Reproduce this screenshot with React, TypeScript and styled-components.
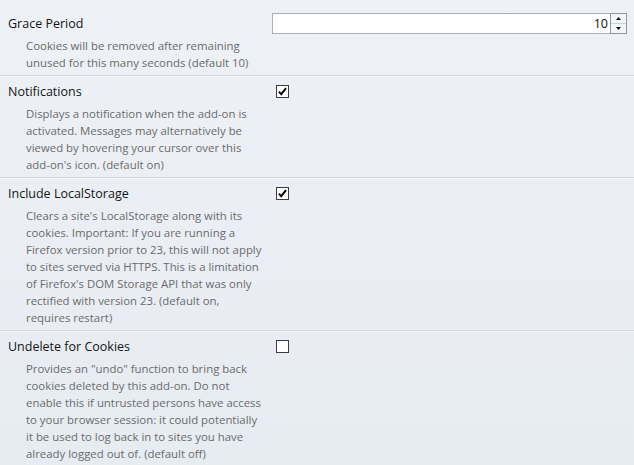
import styled, { createGlobalStyle } from "styled-components"

const GlobalStyle = createGlobalStyle`
  html, body {
    margin: 0;
    padding: 0;
  }
  body {
    min-height: 100vh;
    background: linear-gradient(#eef1f6, #e7ebf2);
    font-family: "Open Sans", "Noto Sans", sans-serif;
  }
`

type Pref = {
  title: string
  lines: string[]
  control: "number" | "on" | "off"
  value?: number
}

const prefs: Pref[] = [
  {
    title: "Grace Period",
    lines: [
      "Cookies will be removed after remaining",
      "unused for this many seconds (default 10)",
    ],
    control: "number",
    value: 10,
  },
  {
    title: "Notifications",
    lines: [
      "Displays a notification when the add-on is",
      "activated. Messages may alternatively be",
      "viewed by hovering your cursor over this",
      "add-on's icon. (default on)",
    ],
    control: "on",
  },
  {
    title: "Include LocalStorage",
    lines: [
      "Clears a site's LocalStorage along with its",
      "cookies. Important: If you are running a",
      "Firefox version prior to 23, this will not apply",
      "to sites served via HTTPS. This is a limitation",
      "of Firefox's DOM Storage API that was only",
      "rectified with version 23. (default on,",
      "requires restart)",
    ],
    control: "on",
  },
  {
    title: "Undelete for Cookies",
    lines: [
      "Provides an \"undo\" function to bring back",
      "cookies deleted by this add-on. Do not",
      "enable this if untrusted persons have access",
      "to your browser session: it could potentially",
      "it be used to log back in to sites you have",
      "already logged out of. (default off)",
    ],
    control: "off",
  },
]

const NumberField = ({ value }: { value: number }) => (
  <Field>
    <FieldValue>{value}</FieldValue>
    <Spinner>
      <SpinButton>
        <svg width="5" height="3" viewBox="0 0 5 3">
          <path d="M0 3 L2.5 0 L5 3 Z" fill="#111" />
        </svg>
      </SpinButton>
      <SpinButton $bottom>
        <svg width="5" height="3" viewBox="0 0 5 3">
          <path d="M0 0 L2.5 3 L5 0 Z" fill="#111" />
        </svg>
      </SpinButton>
    </Spinner>
  </Field>
)

const Checkbox = ({ checked }: { checked: boolean }) => (
  <Box>
    {checked && (
      <svg width="11" height="11" viewBox="0 0 11 11">
        <path
          d="M1.8 5.6 L4.2 8.2 L9 2.2"
          fill="none"
          stroke="#000"
          strokeWidth="1.9"
        />
      </svg>
    )}
  </Box>
)

export default function App() {
  return (
    <>
      <GlobalStyle />
      <Page>
        {prefs.map((p) => (
          <PrefRow key={p.title} $gap={p.control === "number" ? 3 : 5}>
            <Title>{p.title}</Title>
            <Control>
              {p.control === "number" ? (
                <NumberField value={p.value ?? 0} />
              ) : (
                <Checkbox checked={p.control === "on"} />
              )}
            </Control>
            <Desc>
              {p.lines.map((l, i) => (
                <span key={i}>{l}</span>
              ))}
            </Desc>
          </PrefRow>
        ))}
      </Page>
    </>
  )
}

const Page = styled.div`
  padding-top: 6px;
`

const PrefRow = styled.div<{ $gap: number }>`
  display: grid;
  grid-template-columns: 264px 1fr;
  align-items: center;
  row-gap: ${(p) => p.$gap}px;
  padding: 7px 7px 4px 8px;
  border-bottom: 1px solid #d3d8e0;
  box-shadow: 0 1px 0 #f4f6f9;

  &:last-child {
    border-bottom: none;
    box-shadow: none;
  }
`

const Title = styled.div`
  font-size: 12.5px;
  line-height: 17px;
  color: #151515;
  white-space: nowrap;
`

const Control = styled.div`
  display: flex;
  align-items: center;
`

const Desc = styled.div`
  grid-column: 1;
  display: flex;
  flex-direction: column;
  padding-left: 18px;
  font-size: 11.4px;
  line-height: 17px;
  color: #6b6b6b;
  white-space: nowrap;
`

const Field = styled.div`
  display: flex;
  flex: 1;
  height: 21px;
  box-sizing: border-box;
  border: 1px solid #abb0b8;
  background: #fff;
`

const FieldValue = styled.div`
  flex: 1;
  text-align: right;
  padding-right: 2px;
  font-size: 12.5px;
  line-height: 19px;
  color: #111;
`

const Spinner = styled.div`
  display: flex;
  flex-direction: column;
  width: 15px;
  margin: -1px -1px -1px 0;
  border: 1px solid #8d97a5;
  background: #f3f5f8;
`

const SpinButton = styled.div<{ $bottom?: boolean }>`
  flex: 1;
  display: flex;
  align-items: center;
  justify-content: center;
  border-top: ${(p) => (p.$bottom ? "1px solid #b9dcd6" : "none")};
`

const Box = styled.div`
  display: flex;
  align-items: center;
  justify-content: center;
  width: 13px;
  height: 13px;
  margin-left: 4px;
  box-sizing: border-box;
  border: 1px solid #3c3c3c;
  background: #fff;
`
